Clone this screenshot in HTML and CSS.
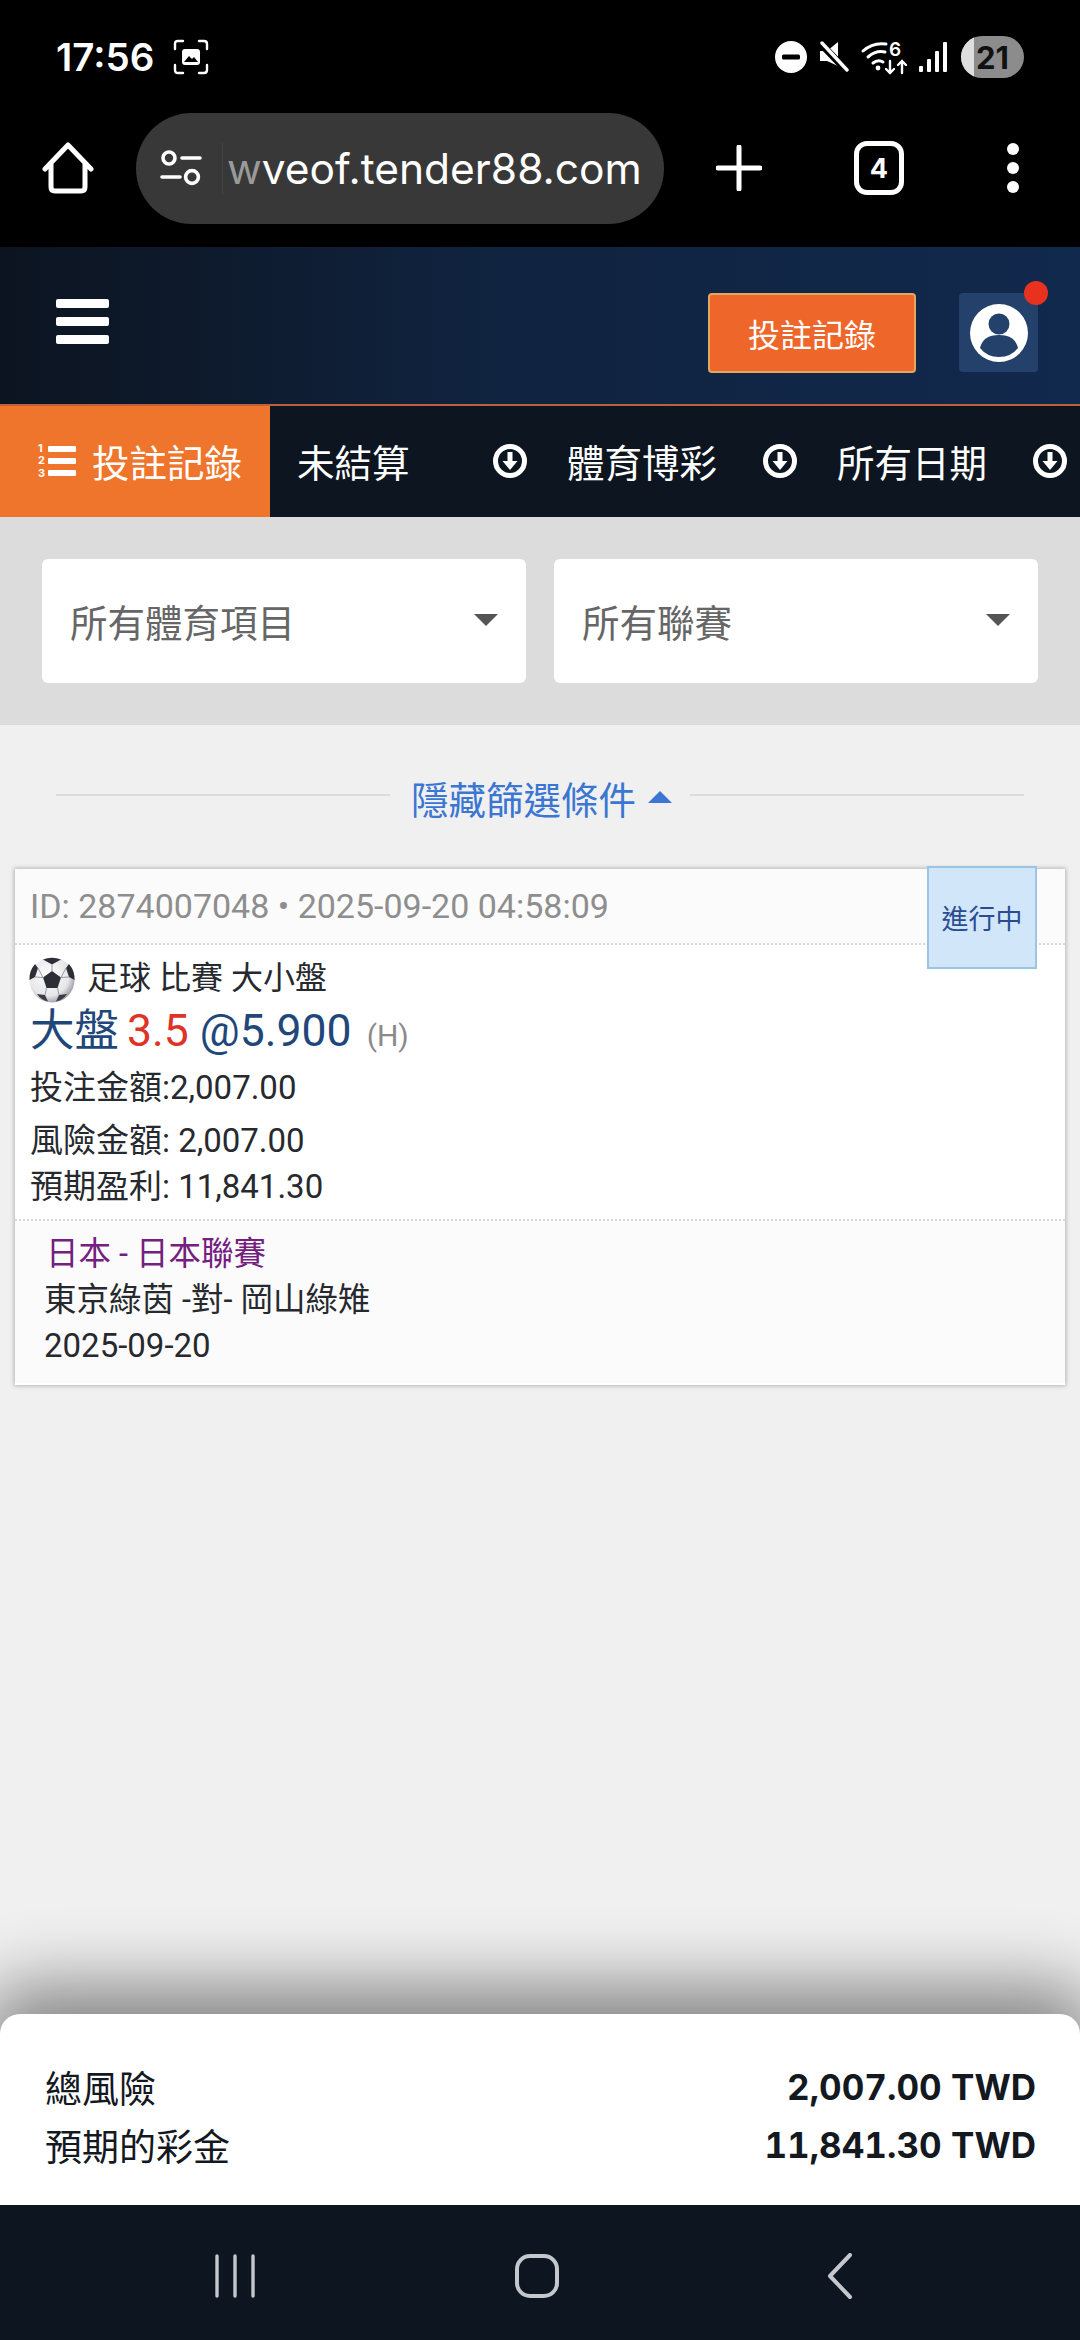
FILE: index.html
```html
<!DOCTYPE html>
<html lang="zh-Hant">
<head>
    <meta charset="UTF-8">
    <meta name="viewport" content="width=device-width, initial-scale=1.0">
    <title>投注記錄</title>
    <link rel="stylesheet" href="styles.css">
</head>
<body>
    <div class="status-bar">
        <div class="status-left">
            <span class="clock">17:56</span>
            <svg class="shot-icon" width="36" height="36" viewBox="0 0 36 36" fill="none" stroke="#fff" stroke-width="2.4" stroke-linecap="round">
                <path d="M2 10V5q0-3 3-3h5M26 2h5q3 0 3 3v5M34 26v5q0 3-3 3h-5M10 34H5q-3 0-3-3v-5"/>
                <rect x="9" y="10" width="18" height="16" rx="3" fill="#fff" stroke="none"/>
                <path d="M11 23l5-6 3 3 2-2 4 5z" fill="#000" stroke="none"/>
            </svg>
        </div>
        <div class="status-right">
            <svg width="32" height="32" viewBox="0 0 32 32"><circle cx="16" cy="16" r="16" fill="#fff"/><rect x="7" y="13.5" width="18" height="5" rx="1.5" fill="#000"/></svg>
            <svg class="mute-icon" width="30" height="32" viewBox="0 0 30 32"><path d="M1 10h7l11-9v24L8 20H1z" fill="#fff"/><path d="M2 3l26 27" stroke="#000" stroke-width="7"/><path d="M3 2l25 27" stroke="#fff" stroke-width="3.400" stroke-linecap="round"/></svg>
            <svg class="wifi-icon" width="46" height="36" viewBox="0 0 46 36" fill="none" stroke="#fff" stroke-width="3" stroke-linecap="round">
                <path d="M2 12Q12 3 25 5M7 18Q15 11 24 13M12 24q5-4 10-1"/>
                <circle cx="17" cy="29" r="2.4" fill="#fff" stroke="none"/>
                <text x="28" y="17" class="wifi-six">6</text>
                <path d="M29 22v12M25 30l4 4 4-4M41 34V22M37 26l4-4 4 4" stroke-width="2.4"/>
            </svg>
            <svg width="28" height="30" viewBox="0 0 28 30" fill="#fff"><rect x="0" y="24" width="4" height="6" rx="1"/><rect x="8" y="17" width="4" height="13" rx="1"/><rect x="16" y="9" width="4" height="21" rx="1"/><rect x="24" y="0" width="4" height="30" rx="1"/></svg>
            <div class="battery"><span class="battery-level"></span><span class="battery-num">21</span></div>
        </div>
    </div>

    <div class="browser-bar">
        <svg class="home-icon" width="52" height="52" viewBox="0 0 52 52" fill="none" stroke="#fff" stroke-width="5" stroke-linecap="round" stroke-linejoin="round">
            <path d="M3 27L26 3l23 24M9 22v23q0 4 4 4h26q4 0 4-4V22"/>
        </svg>
        <div class="url-pill">
            <svg class="tune-icon" width="42" height="36" viewBox="0 0 42 36" fill="none" stroke="#fff" stroke-width="3.6" stroke-linecap="round">
                <circle cx="9" cy="8" r="6"/><path d="M22 8h18M2 27h18"/><circle cx="32" cy="27" r="6.4"/>
            </svg>
            <div class="url-text"><span class="url-fade">w</span>veof.tender88.com</div>
        </div>
        <svg class="plus-icon" width="46" height="46" viewBox="0 0 46 46" stroke="#fff" stroke-width="5" stroke-linecap="round"><path d="M23 2v42M2 23h42"/></svg>
        <div class="tab-count">4</div>
        <div class="more-dots"><span></span><span></span><span></span></div>
    </div>

    <header class="site-header">
        <div class="hamburger"><span></span><span></span><span></span></div>
        <div class="header-actions">
            <div class="record-btn">投註記錄</div>
            <div class="avatar-box">
                <svg width="58" height="58" viewBox="0 0 58 58"><circle cx="29" cy="29" r="29" fill="#fff"/><circle cx="29" cy="20" r="10.5" fill="#24416c"/><path d="M10 44q3-13 19-13t19 13q-7 9-19 9t-19-9z" fill="#24416c"/></svg>
                <span class="notify-dot"></span>
            </div>
        </div>
    </header>

    <nav class="tabs">
        <div class="tab-main">
            <svg width="38" height="38" viewBox="0 0 38 38" fill="#fff">
                <text x="0" y="10" class="list-num">1</text><text x="0" y="22" class="list-num">2</text><text x="0" y="35" class="list-num">3</text>
                <rect x="10" y="4" width="28" height="6" rx="1"/><rect x="10" y="16" width="28" height="6" rx="1"/><rect x="10" y="28" width="28" height="6" rx="1"/>
            </svg>
            <span>投註記錄</span>
        </div>
        <div class="tab-item"><span>未結算</span>
            <svg class="tab-arrow" width="34" height="34" viewBox="0 0 34 34"><circle cx="17" cy="17" r="14.5" fill="none" stroke="#fff" stroke-width="5"/><path d="M14.5 8h5v9h5L17 26 9.500 17h5z" fill="#fff"/></svg>
        </div>
        <div class="tab-item"><span>體育博彩</span>
            <svg class="tab-arrow" width="34" height="34" viewBox="0 0 34 34"><circle cx="17" cy="17" r="14.5" fill="none" stroke="#fff" stroke-width="5"/><path d="M14.5 8h5v9h5L17 26 9.500 17h5z" fill="#fff"/></svg>
        </div>
        <div class="tab-item"><span>所有日期</span>
            <svg class="tab-arrow" width="34" height="34" viewBox="0 0 34 34"><circle cx="17" cy="17" r="14.5" fill="none" stroke="#fff" stroke-width="5"/><path d="M14.5 8h5v9h5L17 26 9.500 17h5z" fill="#fff"/></svg>
        </div>
    </nav>

    <section class="filters">
        <div class="select-box"><span>所有體育項目</span><i class="caret"></i></div>
        <div class="select-box"><span>所有聯賽</span><i class="caret"></i></div>
    </section>

    <main class="content">
        <div class="filter-toggle">
            <span class="toggle-line"></span>
            <span class="toggle-text">隱藏篩選條件</span>
            <i class="caret-up"></i>
            <span class="toggle-line"></span>
        </div>

        <article class="bet-card">
            <div class="bet-head">ID: 2874007048 • 2025-09-20 04:58:09</div>
            <div class="bet-status">進行中</div>
            <div class="bet-body">
                <div class="bet-sport">
                    <svg class="ball" width="46" height="46" viewBox="0 0 46 46">
                        <defs>
                            <radialGradient id="ballShade" cx="42%" cy="40%" r="65%">
                                <stop offset="0" stop-color="#fff"/><stop offset="0.7" stop-color="#e6e6ea"/><stop offset="1" stop-color="#8f8f98"/>
                            </radialGradient>
                        </defs>
                        <circle cx="23" cy="23" r="22.500" fill="url(#ballShade)"/>
                        <path d="M23 14l9 6.500-3.500 10.500h-11L14 20.500z" fill="#2c3036"/>
                        <path d="M14 2.500Q23-1 32 2.500L23 7.500z" fill="#2c3036"/>
                        <path d="M40 7q6 7 5.500 16L40 20l-3-9z" fill="#2c3036"/>
                        <path d="M6 7Q0 14 .5 23L6 20l3-9z" fill="#2c3036"/>
                        <path d="M8 37l8 1 3 6.500Q12 43 8 37zM38 37l-8 1-3 6.500Q34 43 38 37z" fill="#3a3f47"/>
                        <path d="M23 14V7.500M14 20.500L9 11M32 20.500L37 11M17.500 31L16 38M28.500 31L30 38M6 20L14 20.500M40 20L32 20.500" stroke="#9a9aa2" stroke-width="1" fill="none"/>
                    </svg>
                    <span>足球 比賽 大小盤</span>
                </div>
                <div class="bet-pick">大盤 <span class="pick-line">3.5</span> @5.900 <small class="pick-side">(H)</small></div>
                <div class="bet-line bet-stake">投注金額:2,007.00</div>
                <div class="bet-line bet-risk">風險金額: 2,007.00</div>
                <div class="bet-line bet-profit">預期盈利: 11,841.30</div>
            </div>
            <div class="bet-match">
                <div class="league">日本 - 日本聯賽</div>
                <div class="match-line">東京綠茵 -對- 岡山綠雉</div>
                <div class="match-line match-date">2025-09-20</div>
            </div>
        </article>
    </main>

    <section class="summary">
        <div class="summary-row"><span>總風險</span><b>2,007.00 TWD</b></div>
        <div class="summary-row"><span>預期的彩金</span><b>11,841.30 TWD</b></div>
    </section>

    <div class="nav-bar">
        <svg width="40" height="44" viewBox="0 0 40 44" stroke="#c4c7cc" stroke-width="3.400" stroke-linecap="round"><path d="M2 2v40M20 2v40M38 2v40"/></svg>
        <svg class="nav-home" width="44" height="44" viewBox="0 0 44 44" fill="none" stroke="#c4c7cc" stroke-width="4"><rect x="2" y="2" width="40" height="40" rx="13"/></svg>
        <svg width="26" height="46" viewBox="0 0 26 46" fill="none" stroke="#c4c7cc" stroke-width="4" stroke-linecap="round" stroke-linejoin="round"><path d="M23 2L3 23l20 21"/></svg>
    </div>
</body>
</html>
```

FILE: styles.css
```css
/* page */
html, body {
    margin: 0;
    padding: 0;
}

body {
    width: 1080px;
    height: 2340px;
    overflow: hidden;
    display: flex;
    flex-direction: column;
    background-color: #f0f0f0;
    font-family: Roboto, "Noto Sans CJK TC", sans-serif;
}

/* phone status bar */
.status-bar {
    height: 92px;
    box-sizing: border-box;
    padding: 21px 56px 0 56px;
    background-color: #000;
    display: flex;
    justify-content: space-between;
    align-items: flex-start;
    flex-shrink: 0;
}

.status-left {
    display: flex;
    align-items: center;
    gap: 19px;
    height: 72px;
}

.clock {
    color: #fff;
    font-family: Inter, sans-serif;
    font-size: 38.5px;
    font-weight: 600;
}

.status-right {
    display: flex;
    align-items: center;
    height: 72px;
    gap: 12px;
}

.wifi-icon {
    overflow: visible;
}

.wifi-six {
    fill: #fff;
    stroke: none;
    font-family: Inter, sans-serif;
    font-size: 19px;
    font-weight: 600;
}

.battery {
    position: relative;
    width: 63px;
    height: 42px;
    margin-left: 2px;
    border-radius: 21px;
    overflow: hidden;
    background-color: #8c8c8c;
    display: flex;
    align-items: center;
    justify-content: center;
}

.battery-level {
    position: absolute;
    left: 0;
    top: 0;
    bottom: 0;
    width: 13px;
    background-color: #dedede;
}

.battery-num {
    position: relative;
    color: #111;
    font-family: Inter, sans-serif;
    font-size: 31px;
    font-weight: 700;
}

/* browser toolbar */
.browser-bar {
    height: 155px;
    box-sizing: border-box;
    padding-bottom: 3px;
    background-color: #000;
    display: flex;
    align-items: center;
    flex-shrink: 0;
}

.home-icon {
    margin-left: 42px;
}

.url-pill {
    width: 528px;
    height: 111px;
    margin-left: 42px;
    border-radius: 56px;
    background-color: #383838;
    display: flex;
    align-items: center;
    box-sizing: border-box;
    padding-left: 24px;
    overflow: hidden;
}

.url-text {
    margin-left: 20px;
    padding-left: 4px;
    border-left: 1px solid #444;
    color: #fff;
    font-family: Inter, sans-serif;
    font-size: 42.5px;
    white-space: nowrap;
}

.url-fade {
    color: #9a9a9a;
}

.plus-icon {
    margin-left: 52px;
}

.tab-count {
    width: 50px;
    height: 54px;
    margin-left: 92px;
    box-sizing: border-box;
    border: 5px solid #fff;
    border-radius: 13px;
    color: #fff;
    font-family: Inter, sans-serif;
    font-size: 27px;
    font-weight: 700;
    display: flex;
    align-items: center;
    justify-content: center;
}

.more-dots {
    margin-left: 103px;
    display: flex;
    flex-direction: column;
    gap: 7px;
}

.more-dots span {
    width: 12px;
    height: 12px;
    border-radius: 50%;
    background-color: #fff;
}

/* site header */
.site-header {
    height: 159px;
    box-sizing: border-box;
    padding: 46px 42px 0 56px;
    background: linear-gradient(90deg, #0c1420 0%, #10233f 45%, #11294d 100%);
    border-bottom: 2px solid #c0603a;
    display: flex;
    justify-content: space-between;
    align-items: flex-start;
    flex-shrink: 0;
}

.hamburger {
    width: 53px;
    margin-top: 6px;
    display: flex;
    flex-direction: column;
    gap: 9px;
}

.hamburger span {
    height: 9px;
    border-radius: 2px;
    background-color: #fff;
}

.header-actions {
    display: flex;
    gap: 43px;
}

.record-btn {
    width: 208px;
    height: 80px;
    box-sizing: border-box;
    border: 2px solid #e0a860;
    border-radius: 4px;
    background-color: #ee662a;
    color: #fff;
    font-size: 32px;
    display: flex;
    align-items: center;
    justify-content: center;
}

.avatar-box {
    position: relative;
    width: 79px;
    height: 79px;
    border-radius: 4px;
    background-color: #24416c;
    display: flex;
    align-items: center;
    justify-content: center;
}

.notify-dot {
    position: absolute;
    right: -10px;
    top: -12px;
    width: 24px;
    height: 24px;
    border-radius: 50%;
    background-color: #e8321f;
}

/* tabs under the header */
.tabs {
    height: 111px;
    padding-bottom: 2px;
    box-sizing: border-box;
    background-color: #0d1520;
    display: flex;
    flex-shrink: 0;
    color: #fff;
    font-size: 37.5px;
}

.tab-main {
    width: 270px;
    box-sizing: border-box;
    margin-bottom: -2px;
    padding: 0 0 2px 38px;
    background-color: #f0752c;
    display: flex;
    align-items: center;
    gap: 16px;
}

.list-num {
    font-family: Inter, sans-serif;
    font-size: 11px;
    font-weight: 700;
}

.tab-item {
    width: 270px;
    box-sizing: border-box;
    padding: 0 13px 0 27px;
    display: flex;
    align-items: center;
    justify-content: space-between;
}

/* filter selects */
.filters {
    height: 208px;
    box-sizing: border-box;
    padding: 42px;
    background-color: #dcdcdc;
    display: flex;
    gap: 28px;
    flex-shrink: 0;
}

.select-box {
    flex: 1;
    box-sizing: border-box;
    padding: 0 28px 2px 28px;
    border-radius: 6px;
    background-color: #fff;
    color: #666;
    font-size: 37.5px;
    display: flex;
    align-items: center;
    justify-content: space-between;
}

/* bet list */
.caret {
    width: 0;
    height: 0;
    border-left: 12px solid transparent;
    border-right: 12px solid transparent;
    border-top: 12px solid #555;
}

.content {
    flex: 1;
    min-height: 0;
    padding: 0 15px;
}

.filter-toggle {
    height: 144px;
    padding: 0 41px;
    display: flex;
    align-items: center;
    color: #3a76d2;
    font-size: 37.5px;
}

.toggle-line {
    flex: 1;
    height: 2px;
    margin-top: -4px;
    background-color: #dcdcdc;
}

.toggle-text {
    margin: 0 12px 0 21px;
}

.caret-up {
    width: 0;
    height: 0;
    margin-right: 18px;
    border-left: 12px solid transparent;
    border-right: 12px solid transparent;
    border-bottom: 12px solid #3a76d2;
}

.bet-card {
    position: relative;
    height: 516px;
    box-sizing: border-box;
    background-color: #fff;
    box-shadow: 0 0 4px 1px #b5b5b5;
    color: #26292e;
}

.bet-head {
    height: 76px;
    box-sizing: border-box;
    padding: 17px 0 0 15px;
    border-bottom: 2px dotted #d6d8ea;
    background-color: #fbfbfb;
    color: #8e8e8e;
    font-size: 34px;
    line-height: 40px;
}

.bet-status {
    position: absolute;
    right: 28px;
    top: -3px;
    width: 110px;
    height: 103px;
    box-sizing: border-box;
    border: 2px solid #9cc5e4;
    background-color: #d2e6fa;
    color: #2a4d92;
    font-size: 27px;
    display: flex;
    align-items: center;
    justify-content: center;
}

.bet-body {
    height: 276px;
    box-sizing: border-box;
    padding: 12px 15px 0 14px;
    border-bottom: 2px dotted #d8d8d8;
}

.bet-sport {
    display: flex;
    align-items: center;
    gap: 12px;
    height: 46px;
    font-size: 32px;
}

.bet-sport span {
    padding-bottom: 10px;
}

.bet-pick {
    margin-top: 4px;
    padding-left: 1px;
    color: #1f4779;
    font-size: 44.5px;
    line-height: 48px;
}

.pick-line {
    margin-left: -3px;
    color: #de3327;
}

.pick-side {
    margin-left: 4px;
    color: #8a8a8a;
    font-size: 30px;
}

.bet-line {
    padding-left: 1px;
    font-size: 33px;
    line-height: 40px;
}

.bet-stake {
    margin-top: 8px;
}

.bet-risk {
    margin-top: 13px;
}

.bet-profit {
    margin-top: 6px;
}

.bet-match {
    height: 162px;
    box-sizing: border-box;
    padding: 10px 0 0 29px;
    background-color: #fbfbfb;
    font-size: 32.5px;
    line-height: 46px;
}

.league {
    padding-left: 2px;
    color: #74207f;
}

.match-date {
    font-size: 33px;
}

/* bottom summary sheet */
.summary {
    position: relative;
    height: 191px;
    box-sizing: border-box;
    padding: 44px 44px 0 45px;
    border-radius: 20px 20px 0 0;
    background-color: #fff;
    box-shadow: 0 -14px 70px 14px rgba(0, 0, 0, 0.45);
    flex-shrink: 0;
}

.summary-row {
    height: 58px;
    display: flex;
    justify-content: space-between;
    align-items: center;
    color: #14181f;
    font-size: 37px;
}

.summary-row b {
    font-family: Inter, sans-serif;
    font-size: 35px;
    font-weight: 700;
    font-variant-numeric: tabular-nums;
}

/* phone nav bar */
.nav-bar {
    position: relative;
    height: 135px;
    box-sizing: border-box;
    padding: 6px 227px 0 215px;
    background-color: #0d1520;
    display: flex;
    align-items: center;
    justify-content: space-between;
    flex-shrink: 0;
}

.nav-home {
    margin-left: -8px;
}
```
